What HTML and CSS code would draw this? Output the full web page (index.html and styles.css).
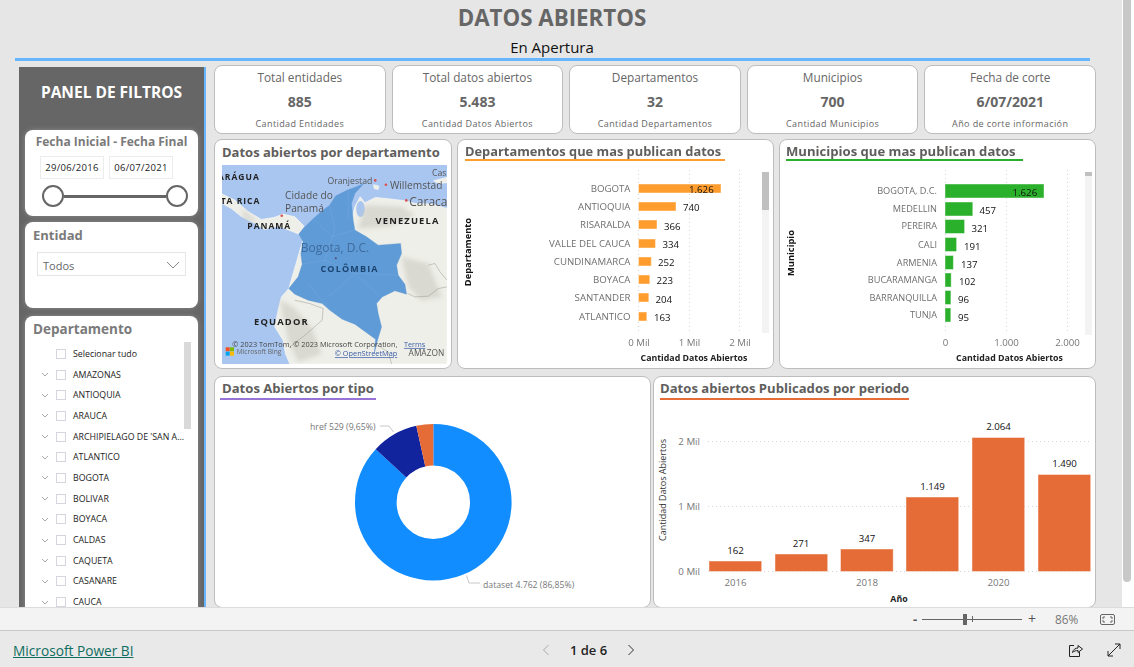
FILE: index.html
```html
<!DOCTYPE html>
<html lang="en">

<head>
    <meta charset="UTF-8">
    <meta name="viewport" content="width=device-width, initial-scale=1.0">
    <title>Datos Abiertos</title>
    <link rel="stylesheet" href="styles.css">
</head>

<body>
    <div class="report">
        <div class="canvas">
            <h1 class="page-title">DATOS ABIERTOS</h1>
            <div class="page-subtitle">En Apertura</div>
            <div class="page-line"></div>

            <div class="content">
                <!-- Filter panel -->
                <aside class="panel">
                    <h2 class="panel-title">PANEL DE FILTROS</h2>

                    <div class="filter-card date-card">
                        <div class="date-title">Fecha Inicial - Fecha Final</div>
                        <div class="date-boxes">
                            <div class="date-box">29/06/2016</div>
                            <div class="date-box">06/07/2021</div>
                        </div>
                        <div class="range">
                            <span class="range-handle"></span>
                            <span class="range-line"></span>
                            <span class="range-handle"></span>
                        </div>
                    </div>

                    <div class="filter-card entity-card">
                        <div class="filter-title">Entidad</div>
                        <div class="dropdown">
                            <span>Todos</span>
                            <svg class="dropdown-arrow" viewBox="0 0 14 8"><path d="M1 1l6 6 6-6" /></svg>
                        </div>
                    </div>

                    <div class="filter-card dept-card">
                        <div class="filter-title">Departamento</div>
                        <div class="dept-scroll"></div>
                        <ul class="dept-list">
                            <li class="dept-all"><span class="check"></span>Selecionar tudo</li>
                            <li><svg class="chev" viewBox="0 0 8 5"><path d="M1 1l3 3 3-3" /></svg><span class="check"></span>AMAZONAS</li>
                            <li><svg class="chev" viewBox="0 0 8 5"><path d="M1 1l3 3 3-3" /></svg><span class="check"></span>ANTIOQUIA</li>
                            <li><svg class="chev" viewBox="0 0 8 5"><path d="M1 1l3 3 3-3" /></svg><span class="check"></span>ARAUCA</li>
                            <li><svg class="chev" viewBox="0 0 8 5"><path d="M1 1l3 3 3-3" /></svg><span class="check"></span>ARCHIPIELAGO DE 'SAN A...</li>
                            <li><svg class="chev" viewBox="0 0 8 5"><path d="M1 1l3 3 3-3" /></svg><span class="check"></span>ATLANTICO</li>
                            <li><svg class="chev" viewBox="0 0 8 5"><path d="M1 1l3 3 3-3" /></svg><span class="check"></span>BOGOTA</li>
                            <li><svg class="chev" viewBox="0 0 8 5"><path d="M1 1l3 3 3-3" /></svg><span class="check"></span>BOLIVAR</li>
                            <li><svg class="chev" viewBox="0 0 8 5"><path d="M1 1l3 3 3-3" /></svg><span class="check"></span>BOYACA</li>
                            <li><svg class="chev" viewBox="0 0 8 5"><path d="M1 1l3 3 3-3" /></svg><span class="check"></span>CALDAS</li>
                            <li><svg class="chev" viewBox="0 0 8 5"><path d="M1 1l3 3 3-3" /></svg><span class="check"></span>CAQUETA</li>
                            <li><svg class="chev" viewBox="0 0 8 5"><path d="M1 1l3 3 3-3" /></svg><span class="check"></span>CASANARE</li>
                            <li><svg class="chev" viewBox="0 0 8 5"><path d="M1 1l3 3 3-3" /></svg><span class="check"></span>CAUCA</li>
                        </ul>
                    </div>
                </aside>

                <main class="dashboard">
                    <!-- KPI cards -->
                    <section class="kpi-row">
                        <div class="card kpi">
                            <div class="kpi-label">Total entidades</div>
                            <div class="kpi-value">885</div>
                            <div class="kpi-note">Cantidad Entidades</div>
                        </div>
                        <div class="card kpi">
                            <div class="kpi-label">Total datos abiertos</div>
                            <div class="kpi-value">5.483</div>
                            <div class="kpi-note">Cantidad Datos Abiertos</div>
                        </div>
                        <div class="card kpi">
                            <div class="kpi-label">Departamentos</div>
                            <div class="kpi-value">32</div>
                            <div class="kpi-note">Cantidad Departamentos</div>
                        </div>
                        <div class="card kpi">
                            <div class="kpi-label">Municipios</div>
                            <div class="kpi-value">700</div>
                            <div class="kpi-note">Cantidad Municipios</div>
                        </div>
                        <div class="card kpi">
                            <div class="kpi-label">Fecha de corte</div>
                            <div class="kpi-value">6/07/2021</div>
                            <div class="kpi-note">Año de corte información</div>
                        </div>
                    </section>

                    <section class="chart-row">
                        <!-- Map -->
                        <div class="card map-card">
                            <h3 class="map-title">Datos abiertos por departamento</h3>
                            <svg class="map" width="225" height="199" viewBox="22 75 674 596">
                                <defs>
                                    <filter id="soft"><feGaussianBlur stdDeviation="7" /></filter>
                                </defs>
                                <rect x="22" y="75" width="674" height="596" fill="#a9c6f0" />
                                <path class="land" d="M22 162 60 180 100 214 140 238 178 232 205 222 240 230 268 258 252 282 222 270 190 258 150 268 118 248 78 228 50 205 22 190Z" />
                                <path class="land" d="M222 445 200 470 190 510 180 560 205 600 212 640 225 671 696 671 696 205 650 192 600 190 570 182 520 176 482 172 450 188 436 170 420 200 410 240 270 280Z" />
                                <path class="land" d="M476 134 492 138 490 148 478 146Z" />
                                <path class="land" d="M656 122 696 112 696 128 670 130Z" />
                                <ellipse cx="437" cy="207" rx="13" ry="24" fill="#a9c6f0" />
                                <g filter="url(#soft)">
                                    <path class="relief" d="M195 480 235 500 290 560 320 640 250 665 220 600Z" />
                                    <path class="relief" d="M560 350 640 370 680 470 620 480 580 440Z" />
                                    <path class="relief" d="M450 195 560 200 600 225 520 260 430 265Z" />
                                    <path class="relief" d="M80 205 130 245 90 240Z" />
                                </g>
                                <path class="border-line" d="M640 375 660 370 675 395 696 420M578 460 600 470 640 468 670 445 696 440M240 480 285 490 325 505 322 540 270 585 225 620M480 610 520 635 530 671" />
                                <path class="colombia" d="M447 130 425 140 398 150 362 168 345 195 320 214 296 235 268 262 252 282 265 305 258 340 262 372 250 410 222 445 240 462 280 480 322 490 345 510 382 537 420 552 452 575 482 597 478 640 488 600 500 560 490 520 485 490 502 470 540 452 575 462 570 432 550 405 545 375 560 340 557 310 490 315 455 290 420 270 415 240 410 190 420 160Z" />
                                <path class="dept-lines" d="M296 235 350 290 420 270M262 372 330 360 420 400 550 405M345 195 360 270 330 360M340 470 420 400 490 465M280 430 345 510M400 150 400 240" />
                                <circle class="city" cx="201" cy="227" r="4" />
                                <circle class="city" cx="481" cy="121" r="4" />
                                <circle class="city" cx="513" cy="134" r="4" />
                                <circle class="city" cx="574" cy="181" r="4" />
                                <circle class="city-dark" cx="363" cy="354" r="3" />
                                <text class="map-country" x="10" y="120">ARÁGUA</text>
                                <text class="map-country" x="18" y="193">TA RICA</text>
                                <text class="map-country" x="98" y="266">PANAMÁ</text>
                                <text class="map-country map-wide" x="482" y="252">VENEZUELA</text>
                                <text class="map-country map-colombia" x="317" y="397">COLÔMBIA</text>
                                <text class="map-country map-wide" x="118" y="553">EQUADOR</text>
                                <text class="map-small" x="338" y="131">Oranjestad</text>
                                <text class="map-city" x="525" y="147">Willemstad</text>
                                <text class="map-small" x="651" y="108">Cas</text>
                                <text class="map-city map-big" x="583" y="199">Caraca</text>
                                <text class="map-city" x="211" y="178">Cidade do</text>
                                <text class="map-city" x="211" y="215">Panamá</text>
                                <text class="map-bogota" x="258" y="337">Bogota, D.C.</text>
                                <text class="map-credit" x="53" y="620">© 2023 TomTom, © 2023 Microsoft Corporation,</text>
                                <text class="map-credit map-link" x="567" y="620">Terms</text>
                                <text class="map-credit map-bing" x="66" y="640">Microsoft Bing</text>
                                <text class="map-credit map-link" x="360" y="648">© OpenStreetMap</text>
                                <text class="map-credit map-amazon" x="581" y="648">AMAZON</text>
                                <rect x="33" y="621" width="12" height="12" fill="#f25022" />
                                <rect x="46" y="621" width="12" height="12" fill="#7fba00" />
                                <rect x="33" y="634" width="12" height="12" fill="#00a4ef" />
                                <rect x="46" y="634" width="12" height="12" fill="#ffb900" />
                            </svg>
                        </div>

                        <!-- Departamentos -->
                        <div class="card chart-card">
                            <h3 class="chart-title"><span class="underline-orange">Departamentos que mas publican datos</span></h3>
                            <svg class="chart" width="317" height="204" viewBox="457 165 317 204">
                                <g class="grid">
                                    <line x1="638.5" y1="170" x2="638.5" y2="332" />
                                    <line x1="689.5" y1="170" x2="689.5" y2="332" />
                                    <line x1="739.5" y1="170" x2="739.5" y2="332" />
                                </g>
                                <rect class="track" x="762" y="172" width="7" height="161" />
                                <rect class="thumb" x="762" y="172" width="7" height="38" />
                                <g class="bars" fill="#ff9c2e">
                                    <rect x="638.5" y="184" width="82.5" height="9" />
                                    <rect x="638.5" y="202" width="37.5" height="9" />
                                    <rect x="638.5" y="220" width="18.5" height="9" />
                                    <rect x="638.5" y="239" width="17" height="9" />
                                    <rect x="638.5" y="257" width="12.8" height="9" />
                                    <rect x="638.5" y="275" width="11.3" height="9" />
                                    <rect x="638.5" y="293" width="10.3" height="9" />
                                    <rect x="638.5" y="312" width="8.3" height="9" />
                                </g>
                                <g class="cat">
                                    <text x="630.5" y="192">BOGOTA</text>
                                    <text x="630.5" y="210">ANTIOQUIA</text>
                                    <text x="630.5" y="228">RISARALDA</text>
                                    <text x="630.5" y="247">VALLE DEL CAUCA</text>
                                    <text x="630.5" y="265">CUNDINAMARCA</text>
                                    <text x="630.5" y="283">BOYACA</text>
                                    <text x="630.5" y="301">SANTANDER</text>
                                    <text x="630.5" y="320">ATLANTICO</text>
                                </g>
                                <g class="val">
                                    <text x="689" y="193">1.626</text>
                                    <text x="683" y="211">740</text>
                                    <text x="664" y="230">366</text>
                                    <text x="662.5" y="248">334</text>
                                    <text x="658" y="266">252</text>
                                    <text x="656.5" y="284">223</text>
                                    <text x="655.5" y="303">204</text>
                                    <text x="654" y="321">163</text>
                                </g>
                                <g class="tick">
                                    <text x="639" y="346">0 Mil</text>
                                    <text x="689.5" y="346">1 Mil</text>
                                    <text x="740" y="346">2 Mil</text>
                                </g>
                                <text class="axis-title" x="694" y="361">Cantidad Datos Abiertos</text>
                                <text class="axis-title axis-side" transform="translate(471 252) rotate(-90)">Departamento</text>
                            </svg>
                        </div>

                        <!-- Municipios -->
                        <div class="card chart-card">
                            <h3 class="chart-title"><span class="underline-green">Municipios que mas publican datos&nbsp;</span></h3>
                            <svg class="chart" width="317" height="204" viewBox="779 165 317 204">
                                <g class="grid">
                                    <line x1="945.5" y1="170" x2="945.5" y2="332" />
                                    <line x1="1006.5" y1="170" x2="1006.5" y2="332" />
                                    <line x1="1067.5" y1="170" x2="1067.5" y2="332" />
                                </g>
                                <rect class="track" x="1085" y="172" width="7" height="163" />
                                <rect class="thumb" x="1085" y="172" width="7" height="4" />
                                <g class="bars" fill="#2bb02b">
                                    <rect x="945" y="184" width="99" height="14" />
                                    <rect x="945" y="202" width="27.8" height="14" />
                                    <rect x="945" y="219.5" width="19.6" height="14" />
                                    <rect x="945" y="237.5" width="11.6" height="14" />
                                    <rect x="945" y="255.5" width="8.4" height="14" />
                                    <rect x="945" y="273" width="6.2" height="14" />
                                    <rect x="945" y="290.5" width="5.9" height="14" />
                                    <rect x="945" y="308" width="5.8" height="14" />
                                </g>
                                <g class="cat cat-small">
                                    <text x="937" y="194">BOGOTA, D.C.</text>
                                    <text x="937" y="212">MEDELLIN</text>
                                    <text x="937" y="229">PEREIRA</text>
                                    <text x="937" y="247.5">CALI</text>
                                    <text x="937" y="265.5">ARMENIA</text>
                                    <text x="937" y="283">BUCARAMANGA</text>
                                    <text x="937" y="300.5">BARRANQUILLA</text>
                                    <text x="937" y="318">TUNJA</text>
                                </g>
                                <g class="val">
                                    <text x="1012.5" y="196">1.626</text>
                                    <text x="979.5" y="214">457</text>
                                    <text x="971.5" y="232">321</text>
                                    <text x="964" y="250">191</text>
                                    <text x="961" y="268">137</text>
                                    <text x="959" y="285">102</text>
                                    <text x="958" y="303">96</text>
                                    <text x="958" y="321">95</text>
                                </g>
                                <g class="tick">
                                    <text x="945.5" y="346">0</text>
                                    <text x="1006.5" y="346">1.000</text>
                                    <text x="1067.5" y="346">2.000</text>
                                </g>
                                <text class="axis-title" x="1009.5" y="361">Cantidad Datos Abiertos</text>
                                <text class="axis-title axis-side" transform="translate(794 253) rotate(-90)">Municipio</text>
                            </svg>
                        </div>
                    </section>

                    <section class="bottom-row">
                        <!-- Donut -->
                        <div class="card chart-card">
                            <h3 class="chart-title bottom-title"><span class="underline-purple">Datos Abiertos por tipo</span></h3>
                            <svg class="chart" width="437" height="200" viewBox="214 407 437 200">
                                <circle class="donut dataset" cx="433.3" cy="502.3" r="57.5" pathLength="100" stroke-dasharray="86.85 13.15" />
                                <circle class="donut href" cx="433.3" cy="502.3" r="57.5" pathLength="100" stroke-dasharray="9.65 90.35" stroke-dashoffset="-86.85" />
                                <circle class="donut other" cx="433.3" cy="502.3" r="57.5" pathLength="100" stroke-dasharray="3.5 96.5" stroke-dashoffset="-96.5" />
                                <path class="leader" d="M380 426h9l4.5 6M466.5 575.5l2.5 7.5h11" />
                                <text class="donut-label" x="310" y="430">href 529 (9,65%)</text>
                                <text class="donut-label" x="483" y="588">dataset 4.762 (86,85%)</text>
                            </svg>
                        </div>

                        <!-- Periodo -->
                        <div class="card chart-card">
                            <h3 class="chart-title bottom-title"><span class="underline-red">Datos abiertos Publicados por periodo</span></h3>
                            <svg class="chart" width="443" height="200" viewBox="653 407 443 200">
                                <g class="grid">
                                    <line x1="708" y1="441.5" x2="1090" y2="441.5" />
                                    <line x1="708" y1="506.5" x2="1090" y2="506.5" />
                                    <line x1="708" y1="571.5" x2="1090" y2="571.5" />
                                </g>
                                <g class="bars" fill="#e66c37">
                                    <rect x="709" y="561" width="52.7" height="10.5" />
                                    <rect x="775" y="554" width="52.7" height="17.5" />
                                    <rect x="840.5" y="549" width="52.7" height="22.5" />
                                    <rect x="906" y="497" width="52.7" height="74.5" />
                                    <rect x="972" y="437.5" width="52.7" height="134" />
                                    <rect x="1038" y="474.5" width="52.7" height="97" />
                                </g>
                                <g class="val val-mid">
                                    <text x="735.5" y="554">162</text>
                                    <text x="801" y="547">271</text>
                                    <text x="867" y="542">347</text>
                                    <text x="932.5" y="490">1.149</text>
                                    <text x="998.5" y="430">2.064</text>
                                    <text x="1064.5" y="467">1.490</text>
                                </g>
                                <g class="tick tick-end">
                                    <text x="700" y="445">2 Mil</text>
                                    <text x="700" y="510">1 Mil</text>
                                    <text x="700" y="575">0 Mil</text>
                                </g>
                                <g class="tick">
                                    <text x="735.5" y="585.5">2016</text>
                                    <text x="867" y="585.5">2018</text>
                                    <text x="998.5" y="585.5">2020</text>
                                </g>
                                <text class="axis-title" x="899" y="602">Año</text>
                                <text class="axis-plain" transform="translate(666 490) rotate(-90)">Cantidad Datos Abiertos</text>
                            </svg>
                        </div>
                    </section>
                </main>
            </div>
        </div>
        <div class="scrollbar"><div class="scrollbar-thumb"></div></div>
    </div>

    <!-- Zoom bar -->
    <div class="zoom-bar">
        <span class="zoom-sign">-</span>
        <div class="zoom-slider">
            <span class="zoom-thumb"></span>
            <span class="zoom-tick"></span>
        </div>
        <span class="zoom-sign zoom-plus">+</span>
        <span class="zoom-value">86%</span>
        <svg class="fit-icon" width="15" height="11" viewBox="0 0 15 11">
            <rect x="0.5" y="0.5" width="14" height="10" rx="1.5" />
            <path d="M3 5V3h2M12 5V3h-2M3 6v2h2M12 6v2h-2" />
        </svg>
    </div>

    <!-- Footer -->
    <footer class="footer">
        <a class="brand" href="#">Microsoft Power BI</a>
        <div class="pager">
            <svg class="pager-arrow pager-off" width="8" height="12" viewBox="0 0 8 12"><path d="M6.5 1 1.5 6l5 5" /></svg>
            <span class="pager-text">1 de 6</span>
            <svg class="pager-arrow" width="8" height="12" viewBox="0 0 8 12"><path d="M1.5 1l5 5-5 5" /></svg>
        </div>
        <div class="footer-icons">
            <svg class="foot-icon" width="15" height="14" viewBox="0 0 15 14">
                <path d="M6 2.5H1.5v11h10V9" />
                <path d="M4.5 9.5C5 6.5 7.5 5 10 5V2.5L14.5 6 10 9.5V7.5C8 7.5 6 8 4.5 9.5Z" />
            </svg>
            <svg class="foot-icon" width="14" height="14" viewBox="0 0 14 14">
                <path d="M1 13 13 1M8 1h5v5M1 8v5h5" />
            </svg>
        </div>
    </footer>
</body>

</html>
```

FILE: styles.css
```css
* {
    box-sizing: border-box;
}

body {
    margin: 0;
    height: 667px;
    overflow: hidden;
    display: flex;
    flex-direction: column;
    font-family: "Open Sans", "Noto Sans", sans-serif;
    background-color: #e9e9e9;
}

/* Report area */
.report {
    height: 607px;
    display: flex;
    overflow: hidden;
    background: #e6e6e6;
}

.canvas {
    width: 1122px;
    height: 607px;
    overflow: hidden;
}

.scrollbar {
    width: 12px;
    background: #fff;
    padding-left: 1px;
}

.scrollbar-thumb {
    width: 8px;
    height: 582px;
    background: #c8c8c8;
    border-radius: 0 0 4px 4px;
}

.page-title {
    margin: 0;
    height: 35px;
    text-align: center;
    width: 1104px;
    font-size: 22.3px;
    line-height: 35px;
    font-weight: 700;
    color: #666;
}

.page-subtitle {
    width: 1104px;
    height: 23px;
    text-align: center;
    font-size: 15px;
    line-height: 25px;
    color: #111;
}

.page-line {
    margin-left: 15px;
    width: 1075px;
    height: 3px;
    background: #66b5ff;
}

.content {
    display: flex;
    padding-left: 19px;
    margin-top: 4px;
    gap: 8px;
}

/* Filter panel */
.panel {
    width: 187px;
    height: 560px;
    margin-top: 2px;
    padding: 0 6px;
    background: #666;
    border-right: 2px solid #66b5ff;
}

.panel-title {
    margin: 0;
    height: 63px;
    text-align: center;
    color: #fff;
    font-size: 15.5px;
    font-weight: 700;
    line-height: 50px;
    white-space: nowrap;
}

.filter-card {
    background: #fff;
    border-radius: 8px;
    margin-bottom: 6px;
    box-shadow: 0 0 5px rgba(255, 255, 255, 0.25);
}

.date-card {
    height: 86px;
    padding-top: 3px;
}

.date-title {
    text-align: center;
    font-size: 12px;
    font-weight: 700;
    line-height: 18px;
    color: #7a7a7a;
}

.date-boxes {
    display: flex;
    gap: 5px;
    margin: 5px 0 0 15px;
}

.date-box {
    width: 64px;
    height: 23px;
    border: 1px solid #ececec;
    text-align: center;
    font-size: 9.5px;
    line-height: 22px;
    letter-spacing: 0.3px;
    color: #222;
}

.range {
    display: flex;
    align-items: center;
    margin: 6px 0 0 17px;
    width: 146px;
}

.range-handle {
    width: 22px;
    height: 22px;
    border: 2px solid #666;
    border-radius: 50%;
    background: #fff;
    flex: none;
}

.range-line {
    flex: 1;
    height: 3px;
    background: #666;
}

.entity-card {
    height: 86px;
    padding: 5px 12px 0 8px;
}

.filter-title {
    font-size: 13px;
    font-weight: 700;
    line-height: 17px;
    color: #7a7a7a;
}

.dropdown {
    display: flex;
    align-items: center;
    justify-content: space-between;
    margin: 8px 0 0 4px;
    height: 24px;
    padding: 2px 5px 0 5px;
    border: 1px solid #e6e6e6;
    font-size: 11px;
    color: #666;
}

.dropdown-arrow {
    width: 14px;
    height: 8px;
}

.dropdown-arrow path {
    fill: none;
    stroke: #888;
    stroke-width: 1;
}

.dept-card {
    position: relative;
    height: 300px;
    margin-top: 8px;
    padding: 4px 0 0 8px;
}

.dept-card .filter-title {
    font-size: 13.5px;
    line-height: 18px;
}

.dept-scroll {
    position: absolute;
    left: 159px;
    top: 26px;
    width: 7px;
    height: 87px;
    background: #d9d9d9;
}

.dept-list {
    list-style: none;
    margin: 5.5px 0 0 0;
    padding: 0 0 0 8px;
}

.dept-list li {
    display: flex;
    align-items: center;
    height: 20.7px;
    font-size: 8.8px;
    color: #222;
    white-space: nowrap;
}

.chev {
    width: 8px;
    height: 5px;
    margin-right: 7px;
    flex: none;
}

.chev path {
    fill: none;
    stroke: #aaa;
    stroke-width: 1;
}

.check {
    width: 10px;
    height: 10px;
    margin-right: 7px;
    border: 1px solid #d5d5dd;
    flex: none;
}

.dept-all .check {
    margin-left: 15px;
}

/* Right side */
.dashboard {
    width: 882px;
}

.card {
    background: #fff;
    border: 1px solid #bdbdbd;
    border-radius: 8px;
}

.kpi-row {
    display: grid;
    grid-template-columns: repeat(5, 1fr);
    gap: 6px;
    height: 69px;
}

.kpi {
    text-align: center;
    color: #666;
}

.kpi-label {
    font-size: 11.8px;
    line-height: 23px;
}

.kpi-value {
    font-size: 14px;
    font-weight: 700;
    line-height: 26px;
}

.kpi-note {
    font-size: 9px;
    line-height: 18px;
    letter-spacing: 0.4px;
}

.chart-row {
    display: grid;
    grid-template-columns: 238px 317px 317px;
    gap: 5px;
    height: 230px;
    margin-top: 5px;
}

.bottom-row {
    display: grid;
    grid-template-columns: 437px 443px;
    gap: 2px;
    height: 232px;
    margin-top: 7px;
}

.map-card {
    padding: 0 0 0 7px;
}

.map-title {
    margin: 0;
    height: 25px;
    font-size: 13px;
    font-weight: 700;
    line-height: 25px;
    color: #605e5c;
    white-space: nowrap;
}

.map {
    display: block;
}

.land {
    fill: #efefe9;
    stroke: #f8f8f4;
    stroke-width: 2;
}

.relief {
    fill: #c9c9c2;
    opacity: 0.6;
}

.border-line {
    fill: none;
    stroke: #9a9a92;
    stroke-width: 1.5;
}

.colombia {
    fill: #5f9bd6;
    stroke: #5a96d0;
    stroke-width: 1;
}

.dept-lines {
    fill: none;
    stroke: #7eaee0;
    stroke-width: 1;
}

.city {
    fill: #d9534f;
}

.city-dark {
    fill: #5a4a72;
}

.map-country {
    font-size: 25.5px;
    font-weight: 700;
    letter-spacing: 3px;
    fill: #222;
}

.map-wide {
    font-size: 28px;
    letter-spacing: 3.5px;
}

.map-colombia {
    font-size: 27px;
    letter-spacing: 3.5px;
    fill: #1c4470;
}

.map-small {
    font-size: 26px;
    fill: #555;
}

.map-city {
    font-size: 30.5px;
    fill: #555;
}

.map-big {
    font-size: 36px;
}

.map-bogota {
    font-size: 36px;
    fill: #3f6c9e;
}

.map-credit {
    font-size: 22px;
    fill: #444;
}

.map-link {
    fill: #3b5fa8;
    text-decoration: underline;
}

.map-bing {
    font-size: 20px;
    fill: #666;
}

.map-amazon {
    font-size: 25px;
    fill: #555;
}

.chart-card {
    overflow: hidden;
}

.chart-title {
    margin: 0;
    height: 25px;
    padding-left: 7px;
    font-size: 13.1px;
    font-weight: 700;
    color: #605e5c;
    white-space: nowrap;
}

.chart-title span {
    display: block;
    width: max-content;
    height: 21px;
    line-height: 23px;
    border-bottom: 2px solid;
}

.bottom-title {
    height: 30px;
    padding-left: 5px;
}

.bottom-title span {
    height: 23px;
    line-height: 22px;
}

.chart-title .underline-orange {
    border-color: #ff9c2e;
    padding-right: 4px;
    font-size: 12.85px;
}

.chart-title .underline-green {
    border-color: #2bb02b;
    margin-left: -1px;
    padding-right: 4px;
}

.chart-title .underline-purple {
    border-color: #9673d5;
    padding: 0 2px;
}

.chart-title .underline-red {
    border-color: #e66c37;
    margin-left: 1px;
}

.chart {
    display: block;
    margin-left: -1px;
}

.grid line {
    stroke: #d5d5d5;
    stroke-width: 1;
    stroke-dasharray: 1 3;
}

.bars rect {
    stroke: rgba(255, 255, 255, 0.45);
    stroke-width: 1;
}

.track {
    fill: #f3f3f3;
}

.thumb {
    fill: #c0c0c0;
}

.cat text {
    font-size: 9.7px;
    text-anchor: end;
    fill: #6f6f6f;
}

.cat-small text {
    font-size: 9.2px;
}

.val text {
    font-size: 9.7px;
    fill: #111;
}

.val-mid text {
    text-anchor: middle;
}

.tick text {
    font-size: 9.7px;
    text-anchor: middle;
    fill: #777;
}

.tick-end text {
    text-anchor: end;
}

.axis-title {
    font-size: 8.8px;
    font-weight: 700;
    text-anchor: middle;
    fill: #222;
}

.axis-side {
    font-size: 9.3px;
    fill: #111;
}

.axis-plain {
    font-size: 9px;
    text-anchor: middle;
    fill: #333;
}

.donut {
    fill: none;
    stroke-width: 41.6;
    transform: rotate(-90deg);
    transform-origin: 433.3px 502.3px;
}

.dataset {
    stroke: #118dff;
}

.href {
    stroke: #12239e;
}

.other {
    stroke: #e66c37;
}

.leader {
    fill: none;
    stroke: #c8c8c8;
    stroke-width: 1;
}

.donut-label {
    font-size: 8.7px;
    fill: #777;
}

/* Bottom bars */
.zoom-bar {
    height: 24px;
    display: flex;
    align-items: center;
    padding-left: 913px;
    background: #f3f3f3;
    border-top: 1px solid #dcdcdc;
    border-bottom: 1px solid #c8c8c8;
    color: #555;
}

.zoom-sign {
    width: 9px;
    font-size: 13px;
    font-weight: 700;
    line-height: 20px;
}

.zoom-plus {
    margin-left: 6px;
    font-weight: 400;
    font-size: 14px;
    width: 12px;
}

.zoom-slider {
    position: relative;
    width: 100px;
    height: 1px;
    background: #666;
}

.zoom-thumb {
    position: absolute;
    left: 41px;
    top: -5px;
    width: 4px;
    height: 11px;
    background: #666;
}

.zoom-tick {
    position: absolute;
    left: 50px;
    top: -3px;
    width: 1px;
    height: 6px;
    background: #666;
}

.zoom-value {
    margin-left: 15px;
    width: 24px;
    font-size: 11.8px;
    color: #777;
}

.fit-icon {
    margin-left: 21px;
}

.fit-icon rect,
.fit-icon path {
    fill: none;
    stroke: #666;
    stroke-width: 1;
}

.footer {
    height: 36px;
    display: flex;
    align-items: center;
    padding: 2px 13px 0;
    background: #e9e9e9;
}

.brand {
    width: 120px;
    font-size: 13.7px;
    color: #0f6e5f;
    white-space: nowrap;
}

.pager {
    display: flex;
    align-items: center;
    margin-left: 409px;
}

.pager-arrow path {
    fill: none;
    stroke: #333;
    stroke-width: 1;
}

.pager-off path {
    stroke: #aaa;
}

.pager-text {
    width: 77px;
    text-align: center;
    font-size: 13px;
    font-weight: 600;
    color: #252423;
}

.footer-icons {
    display: flex;
    align-items: center;
    gap: 24px;
    margin-left: 433px;
}

.foot-icon path {
    fill: none;
    stroke: #222;
    stroke-width: 1;
}
```
